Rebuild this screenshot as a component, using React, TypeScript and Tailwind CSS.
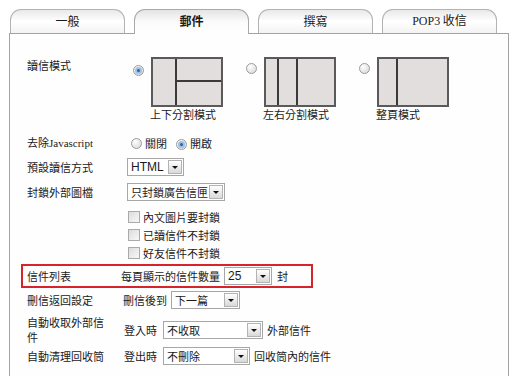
import React from "react";

function Radio({ checked }: { checked?: boolean }) {
  return (
    <span className="inline-flex h-[11px] w-[11px] shrink-0 items-center justify-center rounded-full border border-[#9c9c9c] bg-[radial-gradient(circle_at_35%_30%,#ffffff,#d4d4d4)]">
      {checked && (
        <span className="h-[7px] w-[7px] rounded-full border-2 border-[#9cc3e6] bg-[#2a64a8]" />
      )}
    </span>
  );
}

function Checkbox() {
  return (
    <span className="inline-block h-[12px] w-[12px] shrink-0 border border-[#a9a9a9] bg-gradient-to-br from-[#dcdcdc] to-[#f8f8f8]" />
  );
}

function Select({ value, className }: { value: string; className: string }) {
  return (
    <div
      className={`flex h-[18px] shrink-0 items-center border border-[#a7a7a7] bg-white pl-[3px] ${className}`}
    >
      <span className="flex-1 whitespace-nowrap leading-[16px]">{value}</span>
      <span className="mr-[1px] flex h-[14px] w-[14px] shrink-0 items-center justify-center border border-[#b3b3b3] bg-gradient-to-b from-white to-[#d9d9d9]">
        <span className="h-0 w-0 border-l-[3px] border-r-[3px] border-t-[3px] border-l-transparent border-r-transparent border-t-[#111]" />
      </span>
    </div>
  );
}

function Layout({ kind }: { kind: "split" | "cols" | "full" }) {
  return (
    <div className="flex h-[50px] w-[72px] border-2 border-[#5a5a5a] bg-[#e2dede]">
      {kind === "split" && (
        <>
          <div className="w-[24px] border-r-2 border-[#3a3a3a]" />
          <div className="flex flex-1 flex-col">
            <div className="h-[23px] border-b-2 border-[#3a3a3a]" />
            <div className="flex-1" />
          </div>
        </>
      )}
      {kind === "cols" && (
        <>
          <div className="w-[13px] border-r-2 border-[#3a3a3a]" />
          <div className="w-[19px] border-r-2 border-[#3a3a3a]" />
          <div className="flex-1" />
        </>
      )}
      {kind === "full" && (
        <>
          <div className="w-[19px] border-r-2 border-[#3a3a3a]" />
          <div className="flex-1" />
        </>
      )}
    </div>
  );
}

const tabs = [
  { label: "一般" },
  { label: "郵件", active: true },
  { label: "撰寫" },
  { label: "POP3 收信", serif: true },
];

const layouts: { kind: "split" | "cols" | "full"; caption: string; checked?: boolean }[] = [
  { kind: "split", caption: "上下分割模式", checked: true },
  { kind: "cols", caption: "左右分割模式" },
  { kind: "full", caption: "整頁模式" },
];

export default function App() {
  return (
    <div className="flex h-[376px] w-[519px] flex-col overflow-hidden bg-white text-[11px] text-[#1a1a1a] [font-family:'Noto_Sans_CJK_TC','Noto_Sans',sans-serif]">
      {/* Tabs */}
      <div className="mt-[9px] flex h-[24px] shrink-0 items-start gap-[9px] pl-[10px] text-[12px]">
        {tabs.map((t) =>
          t.active ? (
            <div
              key={t.label}
              className="relative z-10 flex h-[25px] w-[115px] items-center justify-center rounded-t-[11px] border border-b-0 border-[#a9a9a9] bg-gradient-to-b from-[#e4e4e4] via-[#fbfbfb] to-white pb-[2px] font-bold"
            >
              {t.label}
            </div>
          ) : (
            <div
              key={t.label}
              className="flex h-[24px] w-[115px] items-center justify-center rounded-t-[11px] border border-b-0 border-[#b3b3b3] bg-gradient-to-b from-[#e9e9e9] via-white to-[#f3f3f3] pb-[2px]"
            >
              {t.serif ? (
                <span>
                  <span className="[font-family:'Liberation_Serif',serif]">POP3</span> 收信
                </span>
              ) : (
                t.label
              )}
            </div>
          )
        )}
      </div>

      {/* Panel */}
      <div className="ml-[9px] w-[500px] flex-1 border-x border-t border-[#a3a3a3] bg-[#fefefe]">
        {/* 讀信模式 */}
        <div className="mt-[23px] flex h-[74px] items-start pl-[17px]">
          <div className="w-[97px] leading-[16px]">讀信模式</div>
          <div className="ml-[9px] flex gap-[23px]">
            {layouts.map((l) => (
              <div key={l.kind} className="flex items-start gap-[7px]">
                <div className="mt-[4px]">
                  <Radio checked={l.checked} />
                </div>
                <div className="flex flex-col">
                  <Layout kind={l.kind} />
                  <span className="-ml-px leading-[14px]">{l.caption}</span>
                </div>
              </div>
            ))}
          </div>
        </div>

        {/* 去除Javascript */}
        <div className="flex h-[24px] items-center pl-[17px]">
          <div className="w-[97px]">
            去除<span className="[font-family:'Liberation_Serif',serif]">Javascript</span>
          </div>
          <div className="ml-[7px] flex items-center gap-[3px]">
            <Radio />
            <span>關閉</span>
            <span className="ml-[6px]">
              <Radio checked />
            </span>
            <span>開啟</span>
          </div>
        </div>

        {/* 預設讀信方式 */}
        <div className="flex h-[24px] items-center pl-[17px]">
          <div className="w-[100px]">預設讀信方式</div>
          <Select value="HTML" className="w-[57px] [font-family:'Liberation_Sans',sans-serif] text-[12px]" />
        </div>

        {/* 封鎖外部圖檔 */}
        <div className="flex h-[26px] items-center pl-[17px]">
          <div className="w-[100px]">封鎖外部圖檔</div>
          <Select value="只封鎖廣告信匣" className="w-[98px]" />
        </div>

        <div className="mt-[3px] flex flex-col pl-[118px]">
          {["內文圖片要封鎖", "已讀信件不封鎖", "好友信件不封鎖"].map((s) => (
            <div key={s} className="flex h-[18px] items-center gap-[3px]">
              <Checkbox />
              <span>{s}</span>
            </div>
          ))}
        </div>

        {/* 信件列表 */}
        <div className="ml-[11px] mt-[2px] flex h-[24px] w-[292px] items-center border-2 border-[#d7242b] pl-[4px]">
          <div className="w-[94px]">信件列表</div>
          <span>每頁顯示的信件數量</span>
          <Select value="25" className="ml-[4px] w-[48px] [font-family:'Liberation_Sans',sans-serif] text-[12px]" />
          <span className="ml-[5px]">封</span>
        </div>

        {/* 刪信返回設定 */}
        <div className="flex h-[24px] items-center pl-[17px]">
          <div className="w-[96px]">刪信返回設定</div>
          <span>刪信後到</span>
          <Select value="下一篇" className="ml-[4px] w-[69px]" />
        </div>

        {/* 自動收取外部信件 */}
        <div className="flex h-[32px] items-start pl-[17px]">
          <div className="w-[97px] pt-[3px] leading-[15px]">
            自動收取外部信
            <br />件
          </div>
          <div className="mt-[9px] flex items-center">
            <span>登入時</span>
            <Select value="不收取" className="ml-[6px] w-[100px]" />
            <span className="ml-[4px]">外部信件</span>
          </div>
        </div>

        {/* 自動清理回收筒 */}
        <div className="flex h-[24px] items-center pl-[17px]">
          <div className="w-[97px]">自動清理回收筒</div>
          <span>登出時</span>
          <Select value="不刪除" className="ml-[6px] w-[87px]" />
          <span className="ml-[4px]">回收筒內的信件</span>
        </div>
      </div>
    </div>
  );
}
